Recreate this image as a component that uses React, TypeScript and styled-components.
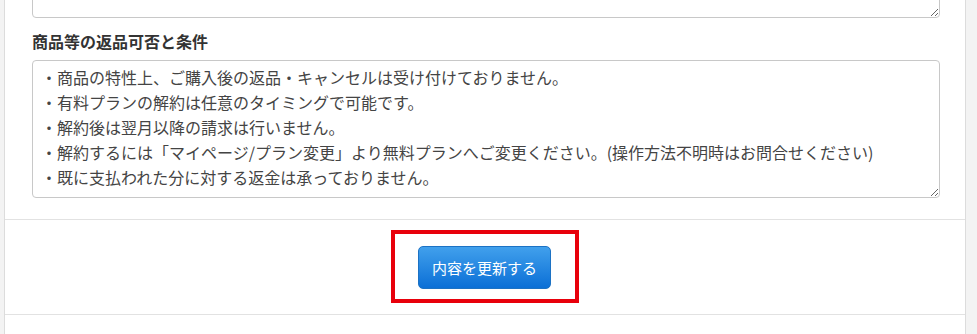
import React from "react";
import styled, { createGlobalStyle } from "styled-components";

const GlobalStyle = createGlobalStyle`
  html, body {
    margin: 0;
    padding: 0;
    background: #f3f3f3;
    font-family: "Noto Sans CJK JP", "Noto Sans", sans-serif;
    color: #333;
  }
`;

////////returns policy text///
const policyLines = [
  "・商品の特性上、ご購入後の返品・キャンセルは受け付けておりません。",
  "・有料プランの解約は任意のタイミングで可能です。",
  "・解約後は翌月以降の請求は行いません。",
  "・解約するには「マイページ/プラン変更」より無料プランへご変更ください。(操作方法不明時はお問合せください)",
  "・既に支払われた分に対する返金は承っておりません。",
];
//////////////////////////////

function App() {
  return (
    <>
      <GlobalStyle />
      <Page>
        <Panel>
          <FormBody>
            <PrevTextArea readOnly value="" />
            <FieldLabel>商品等の返品可否と条件</FieldLabel>
            <PolicyTextArea readOnly value={policyLines.join("\n")} />
          </FormBody>

          <Footer>
            <Highlight>
              <SubmitButton type="button">内容を更新する</SubmitButton>
            </Highlight>
          </Footer>
        </Panel>
      </Page>
    </>
  );
}

const Page = styled.div`
  width: 977px;
  height: 334px;
  overflow: hidden;
  display: flex;
`;

const Panel = styled.main`
  margin-left: 4px;
  width: 960px;
  background: #fff;
  border-left: 1px solid #dcdcdc;
  border-right: 1px solid #dcdcdc;
`;

const FormBody = styled.section`
  display: flex;
  flex-direction: column;
  padding: 0 25px 0 27px;
`;

//shared look for both text areas
const BaseTextArea = styled.textarea`
  box-sizing: border-box;
  width: 100%;
  border: 1px solid #c8c8c8;
  border-radius: 4px;
  background: #fff;
  font-family: "Noto Sans CJK JP", "Noto Sans", sans-serif;
  font-size: 16px;
  color: #444;
  resize: vertical;
  outline: none;
`;

const PrevTextArea = styled(BaseTextArea)`
  height: 60px;
  margin-top: -42px;
`;

const FieldLabel = styled.label`
  margin-top: 12px;
  font-size: 16px;
  font-weight: 700;
  line-height: 22px;
  color: #333;
`;

const PolicyTextArea = styled(BaseTextArea)`
  height: 138px;
  margin-top: 8px;
  padding: 4px 8px;
  line-height: 25px;
  overflow: hidden;
`;

const Footer = styled.footer`
  margin-top: 21px;
  border-top: 1px solid #e2e2e2;
  border-bottom: 1px solid #e2e2e2;
  padding: 10px 0 11px;
  display: flex;
  justify-content: center;
`;

const Highlight = styled.div`
  border: 4px solid #e8000b;
  padding: 12px 24px 10px 23px;
  display: flex;
`;

const SubmitButton = styled.button`
  width: 133px;
  height: 43px;
  border: 1px solid #1c72c4;
  border-radius: 5px;
  background: linear-gradient(#41a0ec, #0b6fd6);
  color: #fff;
  font-family: "Noto Sans CJK JP", "Noto Sans", sans-serif;
  font-size: 15px;
  cursor: pointer;
  padding: 0;
`;

export default App;
